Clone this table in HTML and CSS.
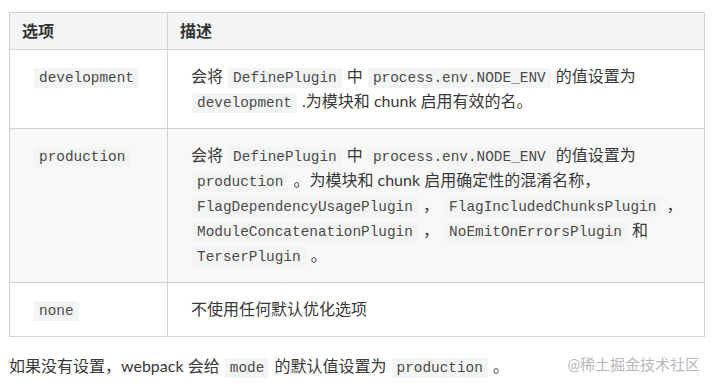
FILE: index.html
```html
<!DOCTYPE html>
<html lang="zh-CN">
<head>
<meta charset="utf-8">
<link rel="stylesheet" href="styles.css">
</head>
<body>
<div class="page">
  <table class="modes">
    <thead>
      <tr><th class="c1">选项</th><th class="c2">描述</th></tr>
    </thead>
    <tbody>
      <tr>
        <td class="c1"><code>development</code></td>
        <td>会将 <code>DefinePlugin</code> 中 <code>process.env.NODE_ENV</code> 的值设置为<br><code>development</code> .为模块和 chunk 启用有效的名。</td>
      </tr>
      <tr class="alt">
        <td class="c1"><code>production</code></td>
        <td>会将 <code>DefinePlugin</code> 中 <code>process.env.NODE_ENV</code> 的值设置为<br><code>production</code> 。为模块和 chunk 启用确定性的混淆名称，<br><code>FlagDependencyUsagePlugin</code> ， <code>FlagIncludedChunksPlugin</code> ，<br><code>ModuleConcatenationPlugin</code> ， <code>NoEmitOnErrorsPlugin</code> 和<br><code>TerserPlugin</code> 。</td>
      </tr>
      <tr>
        <td class="c1"><code>none</code></td>
        <td>不使用任何默认优化选项</td>
      </tr>
    </tbody>
  </table>
  <p class="note">如果没有设置，webpack 会给 <code>mode</code> 的默认值设置为 <code>production</code> 。</p>
  <span class="watermark">@稀土掘金技术社区</span>
</div>
</body>
</html>
```

FILE: styles.css
```css
html, body {
  margin: 0;
  padding: 0;
  background: #fff;
}
body {
  width: 714px;
  height: 384px;
  overflow: hidden;
}
.page {
  position: relative;
  height: 384px;
  padding: 12px 9px 0 9px;
  box-sizing: border-box;
  font-family: Lato, "Noto Sans CJK SC", sans-serif;
  font-size: 16px;
  color: #383838;
}
.modes {
  width: 696px;
  border-collapse: collapse;
  table-layout: fixed;
  line-height: 25px;
}
.modes th, .modes td {
  border: 1px solid #d2d2d2;
  text-align: left;
  vertical-align: top;
  white-space: nowrap;
}
.modes th {
  background: #f3f4f5;
  font-weight: bold;
  color: #333;
  padding: 5px 12px 6px;
  height: 25px;
}
.modes td {
  padding: 13px 23px 15px 23px;
}
.modes th.c1 {
  width: 133px;
}
.modes tr.alt td {
  background: #f8f8f8;
}
code {
  font-family: "Liberation Mono", "DejaVu Sans Mono", monospace;
  font-size: 14.4px;
  line-height: 1;
  background: #f3f4f4;
  color: #4a4a4a;
  padding: 2px 5px;
  border-radius: 2px;
  margin: 0 1px;
}
.note {
  margin: 16px 0 0 0;
  line-height: 25px;
}
.watermark {
  position: absolute;
  right: 14px;
  bottom: 10px;
  color: #b8b8b8;
  font-size: 15px;
  line-height: 20px;
}
```
